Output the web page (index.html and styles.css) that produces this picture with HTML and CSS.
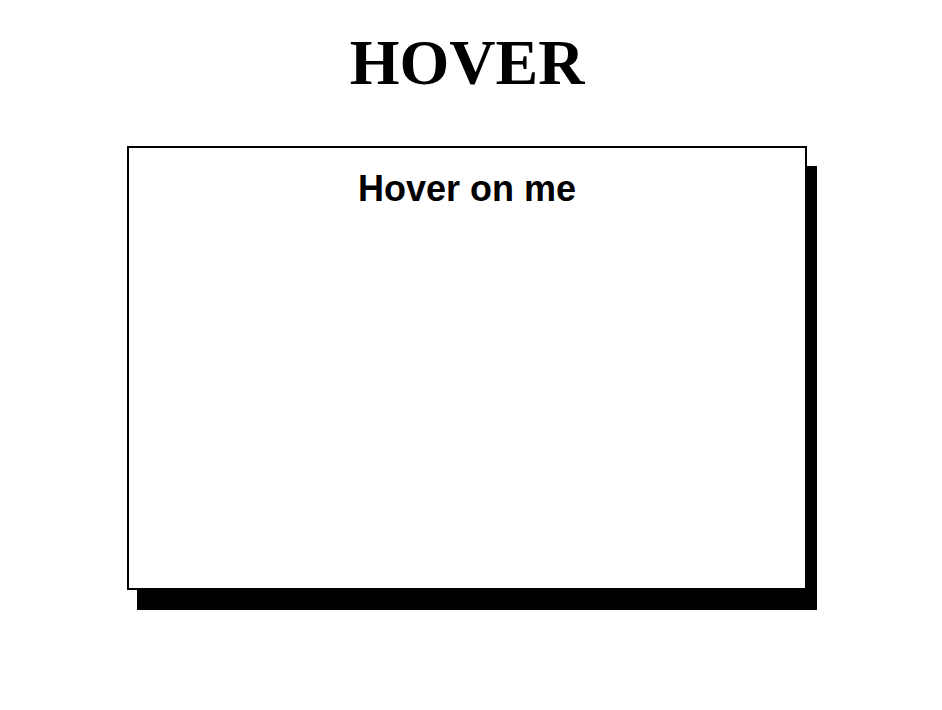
FILE: index.html
```html
<!DOCTYPE html>
<html lang="en">
<head>
  <meta charset="UTF-8" />
  <meta name="viewport" content="width=device-width, initial-scale=1.0"/>
  <title>Hover</title>
  <link rel="stylesheet" href="styles.css">
</head>
<body>
  <div class="page">
    <h1>HOVER</h1>
    <div class="card">
      <h2>Hover on me</h2>
    </div>
  </div>
</body>
</html>
```

FILE: styles.css
```css
body {
  margin: 0;
  padding: 0;
  background: white;
  color: black;
}
.page {
  padding: 26px 8px 60px 0;
  display: flex;
  flex-direction: column;
  align-items: center;
}
h1 {
  font-family: 'Liberation Serif', 'Times New Roman', serif;
  font-size: 64px;
  font-weight: bold;
  line-height: 74px;
  margin: 0 0 46px;
}
.card {
  box-sizing: border-box;
  width: 680px;
  height: 444px;
  border: 2px solid black;
  box-shadow: 10px 20px 0 0 black;
  padding-top: 20px;
  text-align: center;
}
h2 {
  font-family: 'Liberation Sans', Arial, sans-serif;
  font-size: 36px;
  font-weight: bold;
  line-height: 42px;
  margin: 0;
}
```
